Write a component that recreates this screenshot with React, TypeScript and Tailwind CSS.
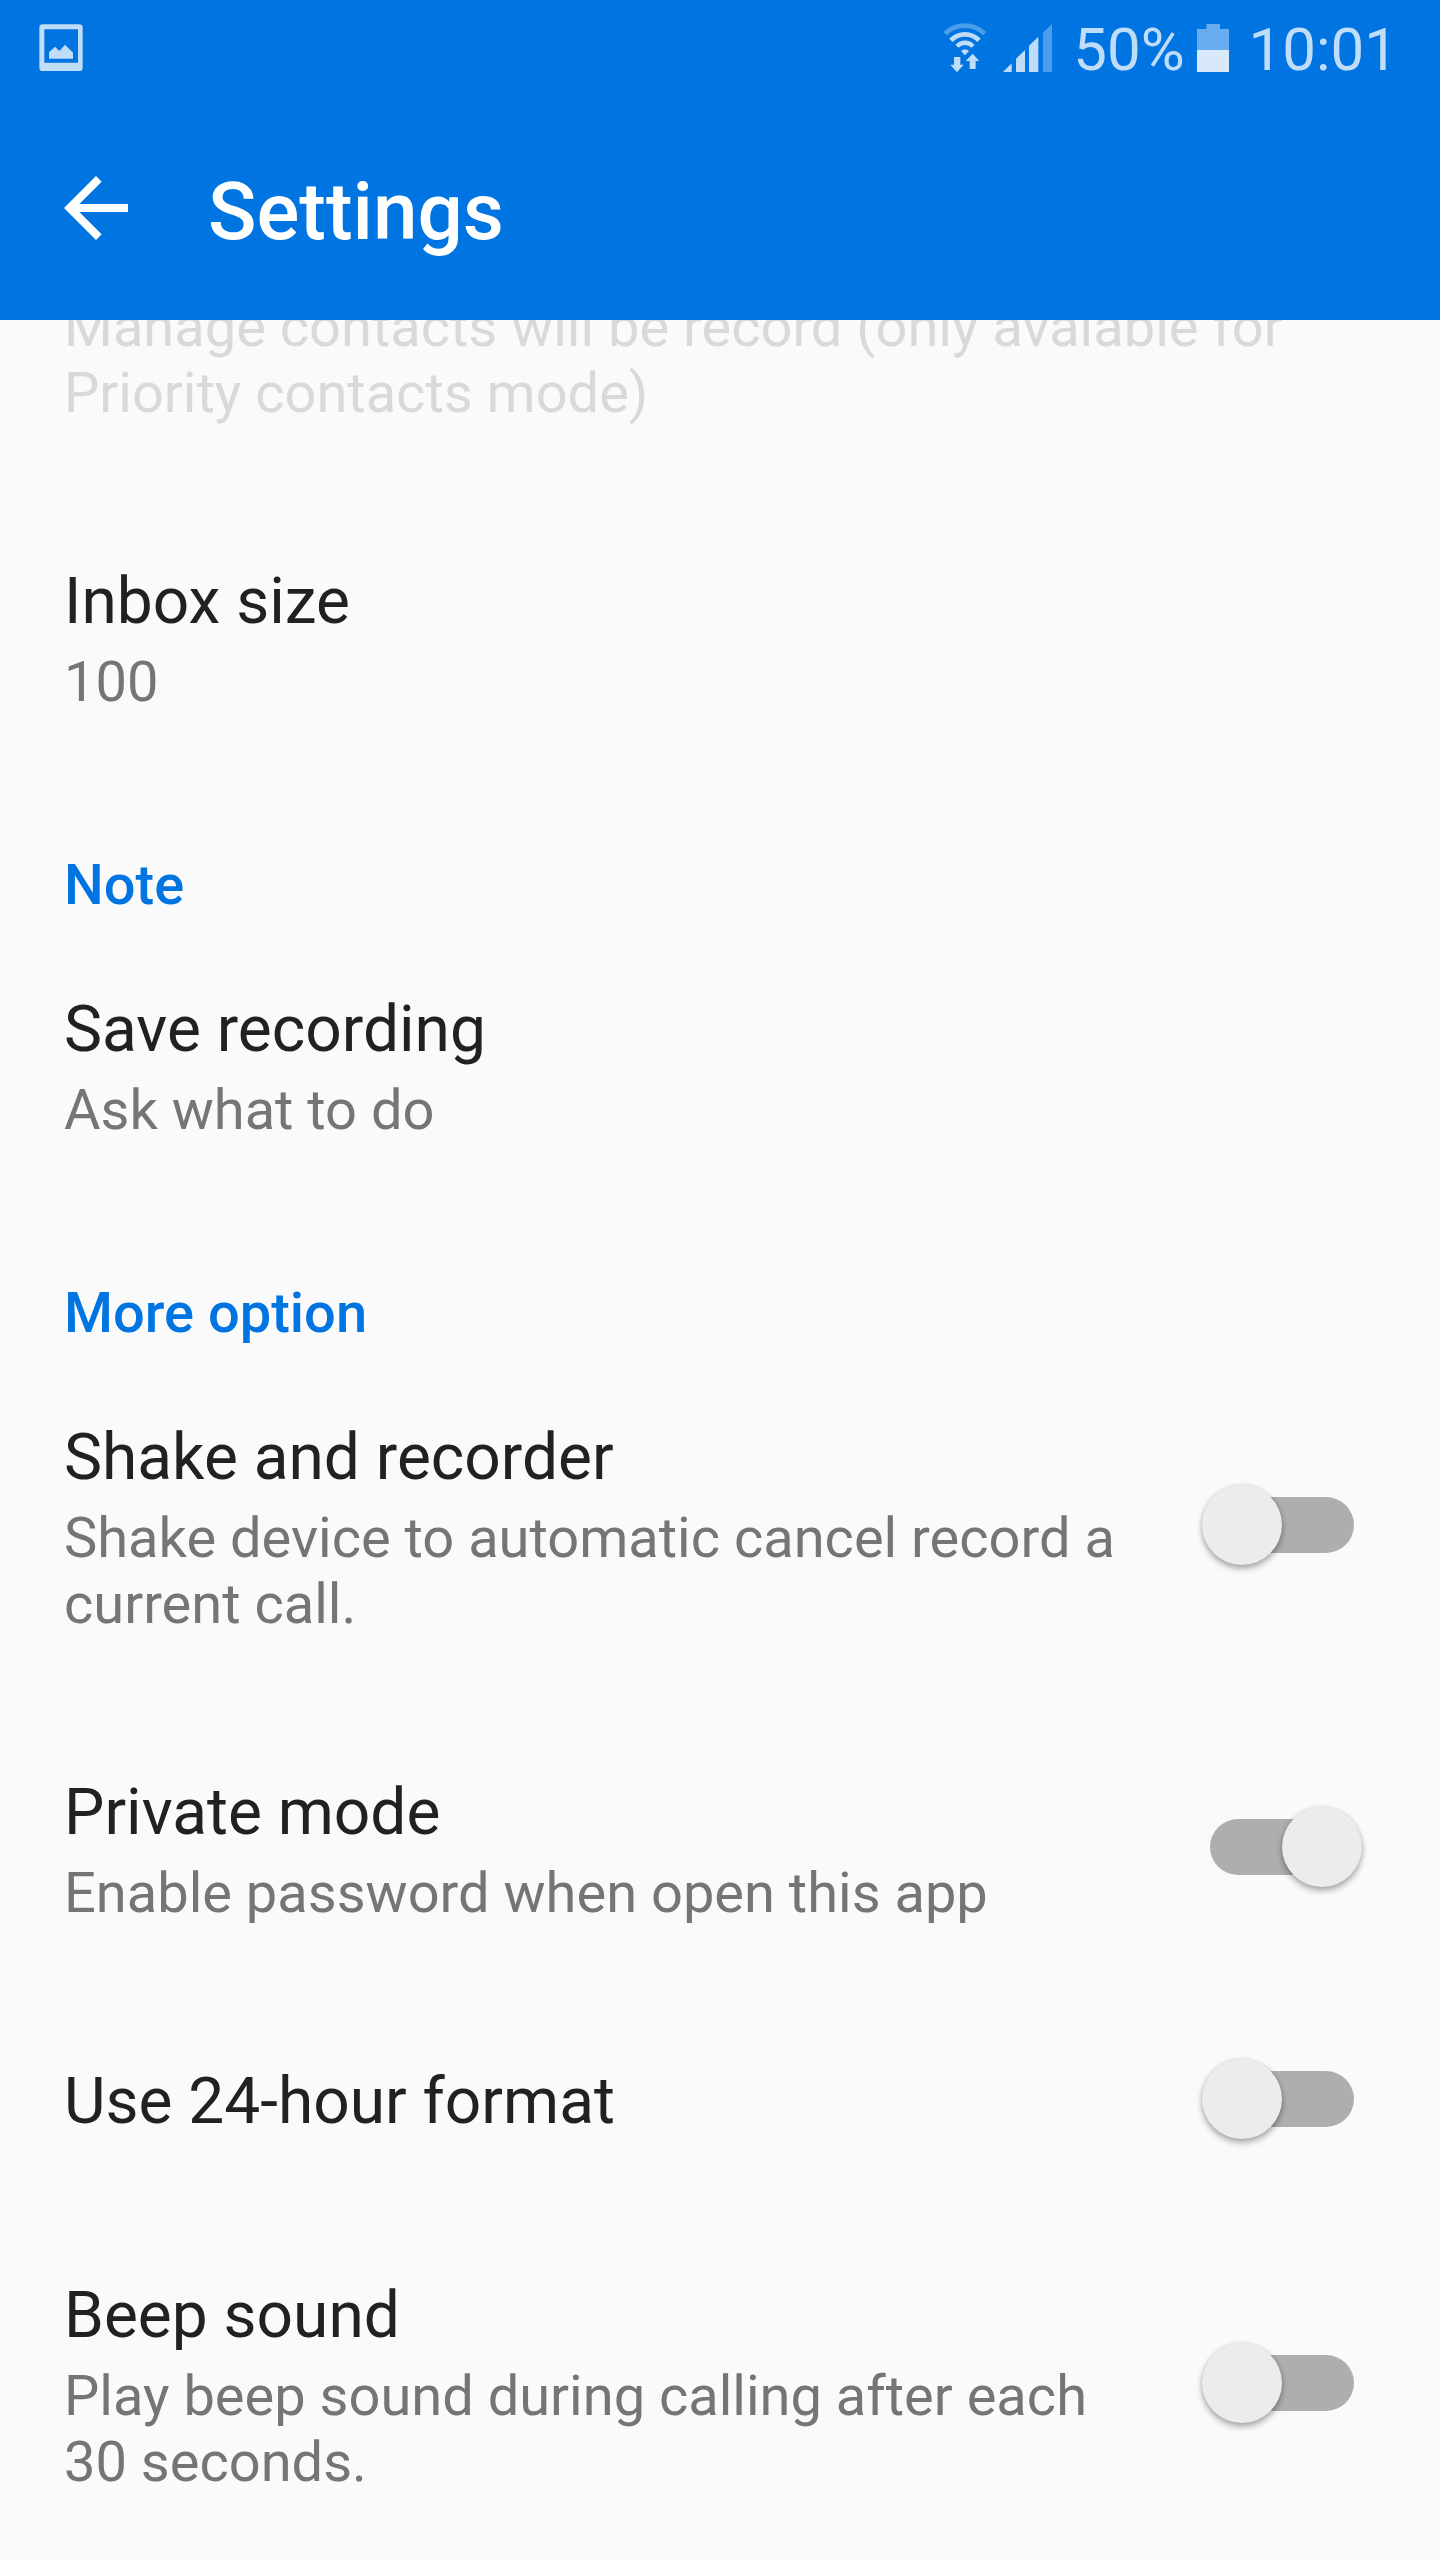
import { useState } from 'react';

const ScreenshotIcon = () => (
  <svg viewBox="117 72 132 144" className="h-12 w-11" fill="#bfdcf8" aria-hidden="true">
    <path
      fillRule="evenodd"
      d="M128 73h110a10 10 0 0 1 10 10v120a10 10 0 0 1-10 10H128a10 10 0 0 1-10-10V83a10 10 0 0 1 10-10zM133 88v100h101V88z"
    />
    <path d="M147 176v-19l18-17 13 13 17-19 24 24v18z" />
  </svg>
);

const WifiIcon = () => (
  <svg viewBox="71 72 132 144" className="h-12 w-11 overflow-visible" fill="none" aria-hidden="true">
    <path d="M77 101A85 85 0 0 1 196 101" stroke="#4c9dea" strokeWidth="14" />
    <path d="M95 121A58 58 0 0 1 179 121" stroke="#bfdcf8" strokeWidth="14" />
    <path d="M113 139A32 32 0 0 1 161 139" stroke="#bfdcf8" strokeWidth="13" />
    <path d="M125 153q12-11 24 0l-12 13z" fill="#bfdcf8" />
    <path d="M104 171h19v23h10l-20 23-20-23h11z" fill="#bfdcf8" />
    <path d="M160 161l20 22h-11v24h-18v-24h-12z" fill="#bfdcf8" />
  </svg>
);

const SignalIcon = () => (
  <svg viewBox="249 72 150 144" className="h-12 w-[50px] overflow-visible" fill="#bfdcf8" aria-hidden="true">
    <path d="M249 216l26-26v26z" />
    <path d="M288 216v-40l27-26v66z" />
    <path d="M327 216v-79l28-27v106z" />
    <path d="M369 216V98l27-27v145z" fill="#4c9dea" />
  </svg>
);

const BatteryIcon = () => (
  <svg viewBox="0 0 96 144" className="h-12 w-8" aria-hidden="true">
    <path d="M28 0h41v15h27v64H0V15h28z" fill="#66acee" />
    <path d="M0 78h96v66H0z" fill="#d8e9fb" />
  </svg>
);

const rowClass = 'flex w-full items-center gap-16 pr-[78px] pb-[11px] pl-16 text-left';

const RowText = ({ title, summary }: { title: string; summary?: string }) => (
  <span className="flex flex-1 flex-col gap-[9px] pt-[67px] pb-[60px]">
    <span className="text-[64px] leading-[76px] text-[#212121]">{title}</span>
    {summary && <span className="text-[56px] leading-[66px] text-[#757575]">{summary}</span>}
  </span>
);

const SettingRow = ({ title, summary }: { title: string; summary: string }) => (
  <button type="button" className={rowClass}>
    <RowText title={title} summary={summary} />
  </button>
);

const SectionTitle = ({ children }: { children: string }) => (
  <h2 className="px-16 pt-[66px] pb-[7px] text-[56px] leading-[66px] font-medium text-[#0074e1]">{children}</h2>
);

interface SwitchRowProps {
  title: string;
  summary?: string;
  defaultOn?: boolean;
}

const SwitchRow = ({ title, summary, defaultOn = false }: SwitchRowProps) => {
  const [on, setOn] = useState(defaultOn);

  return (
    <label className={rowClass}>
      <RowText title={title} summary={summary} />
      <span className="relative flex h-20 w-40 shrink-0 items-center px-2">
        <input
          type="checkbox"
          role="switch"
          checked={on}
          onChange={(e) => setOn(e.target.checked)}
          className="peer absolute inset-0 size-full appearance-none"
        />
        <span className="h-14 w-full rounded-full bg-[#aeaeae]" />
        <span className="absolute top-0 left-0 size-20 rounded-full bg-[#ececec] shadow-[0_4px_6px_rgba(0,0,0,0.3),0_0_4px_rgba(0,0,0,0.12)] peer-checked:left-20" />
      </span>
    </label>
  );
};

const App = () => {
  return (
    <div className="flex h-screen flex-col bg-[#fafafa] font-[Roboto,sans-serif]">
      <header className="shrink-0 bg-[#0074e1]">
        <div className="flex h-24 items-center justify-between pr-[42px] pl-[39px] text-[60px] leading-[70px] text-[#bfdcf8]">
          <ScreenshotIcon />
          <div className="flex items-center">
            <WifiIcon />
            <div className="ml-4">
              <SignalIcon />
            </div>
            <span className="ml-5 pt-1">50%</span>
            <div className="ml-3">
              <BatteryIcon />
            </div>
            <span className="ml-5 pt-1">10:01</span>
          </div>
        </div>
        <div className="flex h-56 items-center gap-16 px-12">
          <button type="button" aria-label="Back">
            <svg viewBox="0 0 24 24" className="size-24" fill="#ffffff" aria-hidden="true">
              <path d="M20 11H7.83l5.59-5.59L12 4l-8 8 8 8 1.41-1.41L7.83 13H20v-2z" />
            </svg>
          </button>
          <h1 className="pt-2 text-[80px] leading-[94px] font-medium text-white">Settings</h1>
        </div>
      </header>

      <main className="min-h-0 flex-1 overflow-y-auto [scrollbar-width:none]">
        {/* scrolled partly under the toolbar, disabled outside Priority contacts mode */}
        <p className="-mt-[26px] px-16 pb-[71px] text-[56px] leading-[66px] text-[#d9d9d9]">
          Manage contacts will be record (only avalable for Priority contacts mode)
        </p>
        <SettingRow title="Inbox size" summary="100" />

        <SectionTitle>Note</SectionTitle>
        <SettingRow title="Save recording" summary="Ask what to do" />

        <SectionTitle>More option</SectionTitle>
        <SwitchRow title="Shake and recorder" summary="Shake device to automatic cancel record a current call." />
        <SwitchRow title="Private mode" summary="Enable password when open this app" defaultOn />
        <SwitchRow title="Use 24-hour format" />
        <SwitchRow title="Beep sound" summary="Play beep sound during calling after each 30 seconds." />
      </main>
    </div>
  );
};

export default App;
